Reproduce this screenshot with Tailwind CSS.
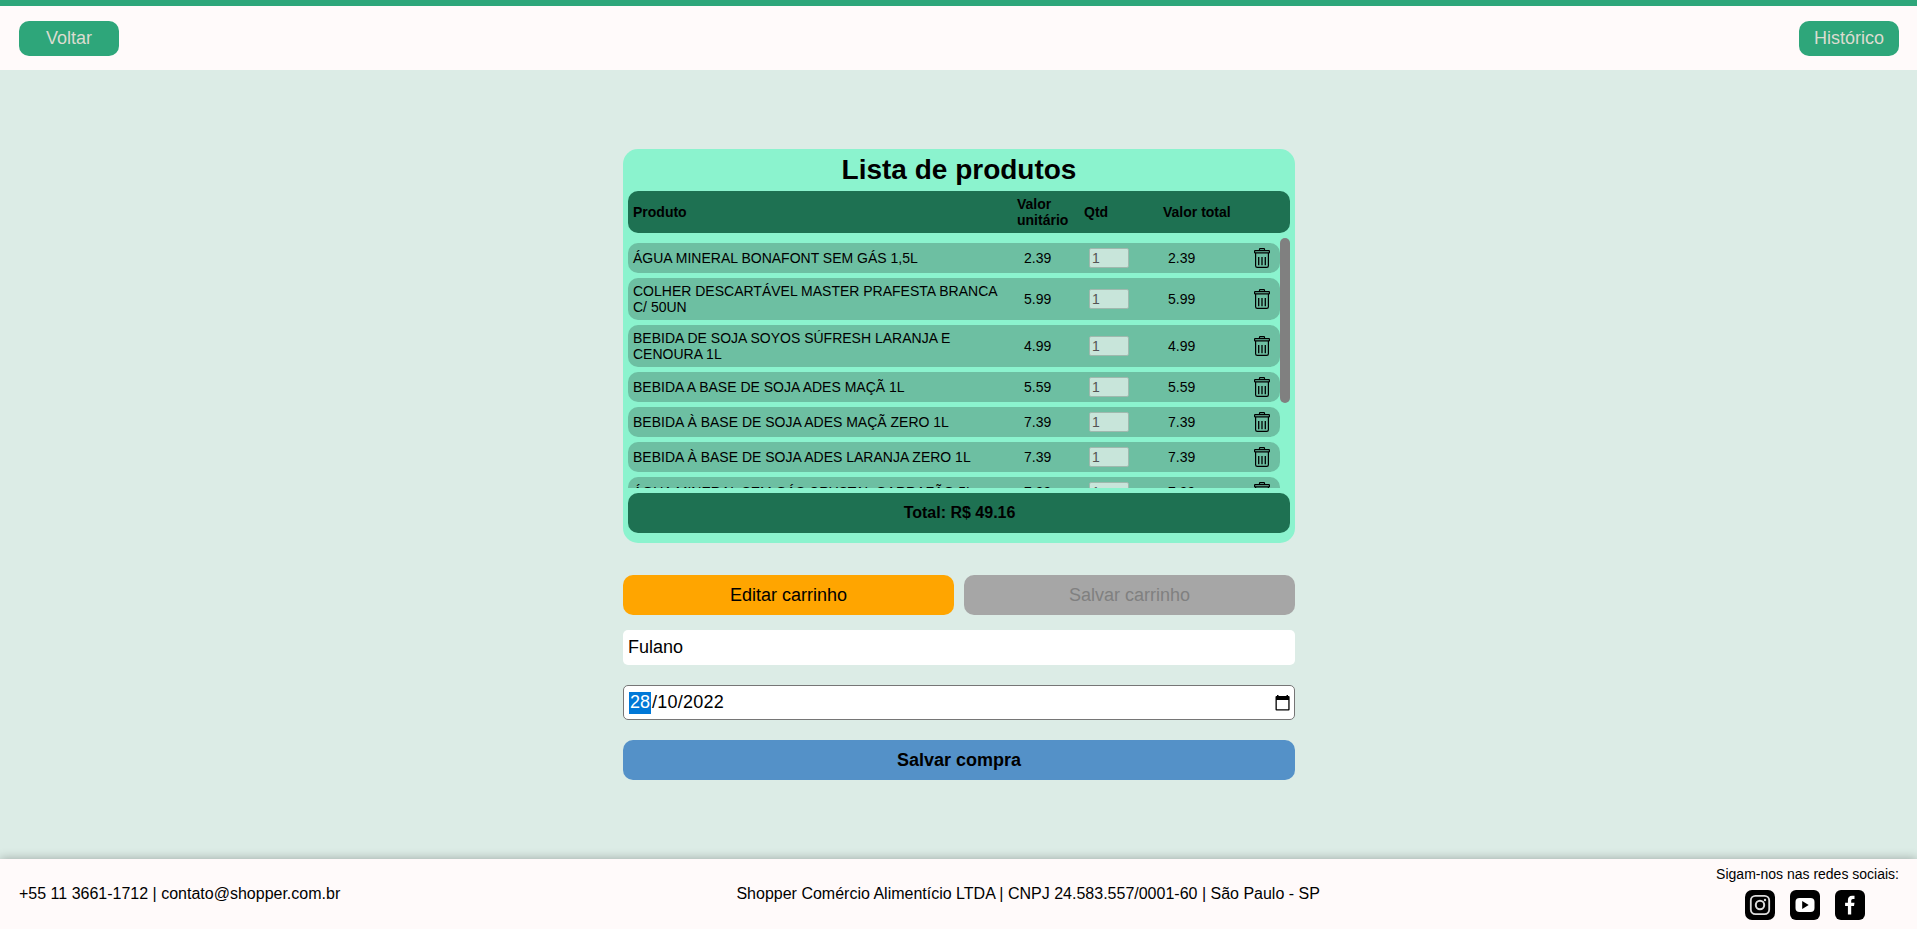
<!DOCTYPE html>
<html lang="pt-BR">
<head>
<meta charset="utf-8">
<title>Carrinho</title>
<script src="https://cdn.jsdelivr.net/npm/@tailwindcss/browser@4"></script>
</head>
<body class="flex h-[929px] flex-col overflow-hidden bg-[#dcece6] font-['Liberation_Sans',Arial,sans-serif] text-black">
<svg class="hidden">
  <symbol id="trash" viewBox="0 0 16 20">
    <g fill="none" stroke="#000" stroke-width="1.2">
      <path d="M5.5 2.6V1.2q0-.6.6-.6h3.8q.6 0 .6.6v1.4"/>
      <rect x=".6" y="2.6" width="14.8" height="2.3" rx=".5"/>
      <path d="M1.6 5v12.7q0 1.7 1.7 1.7h9.4q1.7 0 1.7-1.7V5"/>
      <path d="M4.7 9v8.2M8 9v8.2M11.3 9v8.2" stroke-width="1.3"/>
    </g>
  </symbol>
</svg>
<header class="flex h-[70px] shrink-0 items-center justify-between border-t-6 border-[#2ea67a] bg-[#fffafa] px-[19px] pt-px">
  <button class="h-[35px] w-[100px] rounded-[10px] bg-[#2ea67a] pb-px text-lg text-[#dcdcd0]">Voltar</button>
  <button class="mr-[-1px] h-[35px] w-[100px] rounded-[10px] bg-[#2ea67a] pb-px text-lg text-[#dcdcd0]">Histórico</button>
</header>

<main class="ml-[623px] flex w-[672px] grow flex-col pt-[79px]">
  <section class="flex h-[394px] shrink-0 flex-col rounded-[15px] bg-[#8bf3ce] px-[5px]">
    <h1 class="flex h-[42px] items-center justify-center text-[28px] font-bold">Lista de produtos</h1>
    <div class="flex h-[42px] shrink-0 items-center rounded-[10px] bg-[#1e7152] pl-[5px] text-[14px] leading-4 font-bold">
      <span class="w-[384px]">Produto</span><span class="w-[67px]">Valor unitário</span><span class="w-[79px]">Qtd</span><span>Valor total</span>
    </div>
    <div class="mt-[5px] flex h-[250px] shrink-0 overflow-hidden">
      <ul id="rows" class="flex w-[652px] flex-col gap-[5px] pt-[5px] text-[14px] leading-4"></ul>
      <div class="h-[165px] w-[10px] rounded-[5px] bg-[#808080]"></div>
    </div>
    <div class="mt-[5px] flex h-10 shrink-0 items-center justify-center rounded-[10px] bg-[#1e7152] pl-px text-base font-bold">Total: R$ 49.16</div>
  </section>
  <div class="mt-8 flex shrink-0 gap-[10px] text-lg">
    <button class="h-10 flex-1 rounded-[10px] bg-[#ffa500]">Editar carrinho</button>
    <button class="h-10 flex-1 rounded-[10px] bg-[#a6a6a6] text-[#808080]">Salvar carrinho</button>
  </div>
  <div class="mt-[15px] flex h-[35px] shrink-0 items-center rounded-[5px] bg-white px-[5px] pb-[2px] text-lg">Fulano</div>
  <div class="mt-5 flex h-[35px] shrink-0 items-center rounded-[5px] border border-[#767676] bg-white pr-1 pl-[5px] text-lg">
    <span class="flex h-[22px] w-[22px] items-center justify-center bg-[#0078d7] pb-[2px] text-white">28</span><span class="pb-[2px] pl-px tracking-[0.25px]">/10/2022</span>
    <svg class="ml-auto h-4 w-[15px]" viewBox="0 0 15 16"><path fill="#000" fill-rule="evenodd" d="M2 0h1.5v1h8V0H13v1h.6q1 0 1 1v12.5q0 1-1 1H1.5q-1 0-1-1V2q0-1 1-1H2zM1.8 5v9.2h11.5V5z"/></svg>
  </div>
  <button class="mt-5 h-10 shrink-0 rounded-[10px] bg-[#5491c8] text-lg font-bold">Salvar compra</button>
</main>

<footer class="flex h-[70px] shrink-0 items-center justify-between bg-[#fffafa] pr-[18px] pl-[19px] text-base shadow-[0_0_10px_rgba(0,0,0,0.3)]">
  <p>+55 11 3661-1712 | contato@shopper.com.br</p>
  <p>Shopper Comércio Alimentício LTDA | CNPJ 24.583.557/0001-60 | São Paulo - SP</p>
  <div class="flex flex-col items-center gap-2 pb-[2px]">
    <p class="text-[14px] leading-4">Sigam-nos nas redes sociais:</p>
    <div class="flex gap-[15px] pr-[5px]">
      <svg class="size-[30px]" viewBox="0 0 30 30"><rect width="30" height="30" rx="7"/><g fill="none" stroke="#ddd"><rect x="5.8" y="5.8" width="18.4" height="18.4" rx="4.6" stroke-width="1.8"/><circle cx="15" cy="15" r="4.2" stroke-width="2"/></g><circle cx="20" cy="10" r="1.2" fill="#ddd"/></svg>
      <svg class="size-[30px]" viewBox="0 0 30 30"><rect width="30" height="30" rx="6"/><rect x="5.5" y="8" width="19" height="14" rx="4" fill="#fff"/><path d="M12.2 11v8l6.5-4z"/></svg>
      <svg class="size-[30px]" viewBox="0 0 30 30"><rect width="30" height="30" rx="6"/><path fill="#fff" d="M12.9 24.5V16h-2.8v-3.3h2.8v-2.4q0-4.5 4.2-4.5h2.4v3.1h-1.7q-1.6 0-1.6 1.6v2.2h3.3l-.5 3.3h-2.8v8.5z"/></svg>
    </div>
  </div>
</footer>
<script>
const items = [
  ['ÁGUA MINERAL BONAFONT SEM GÁS 1,5L', '2.39'],
  ['COLHER DESCARTÁVEL MASTER PRAFESTA BRANCA C/ 50UN', '5.99'],
  ['BEBIDA DE SOJA SOYOS SÚFRESH LARANJA E CENOURA 1L', '4.99'],
  ['BEBIDA A BASE DE SOJA ADES MAÇÃ 1L', '5.59'],
  ['BEBIDA À BASE DE SOJA ADES MAÇÃ ZERO 1L', '7.39'],
  ['BEBIDA À BASE DE SOJA ADES LARANJA ZERO 1L', '7.39'],
  ['ÁGUA MINERAL SEM GÁS CRYSTAL GARRAFÃO 5L', '7.99'],
];
document.getElementById('rows').innerHTML = items.map(([name, price]) => `
  <li class="flex shrink-0 items-center rounded-[10px] bg-[#6dbfa2] py-[5px] pl-[5px]">
    <span class="w-[391px] pr-[18px]">${name}</span>
    <span class="w-[65px]">${price}</span>
    <span class="flex h-5 w-[40px] items-center rounded-[2px] border border-[#9fb9ae] bg-[#c8e5da] pl-[2px] text-[#545454]">1</span>
    <span class="ml-[39px] w-[86px]">${price}</span>
    <svg class="h-5 w-4"><use href="#trash"/></svg>
  </li>`).join('');
</script>
</body>
</html>
